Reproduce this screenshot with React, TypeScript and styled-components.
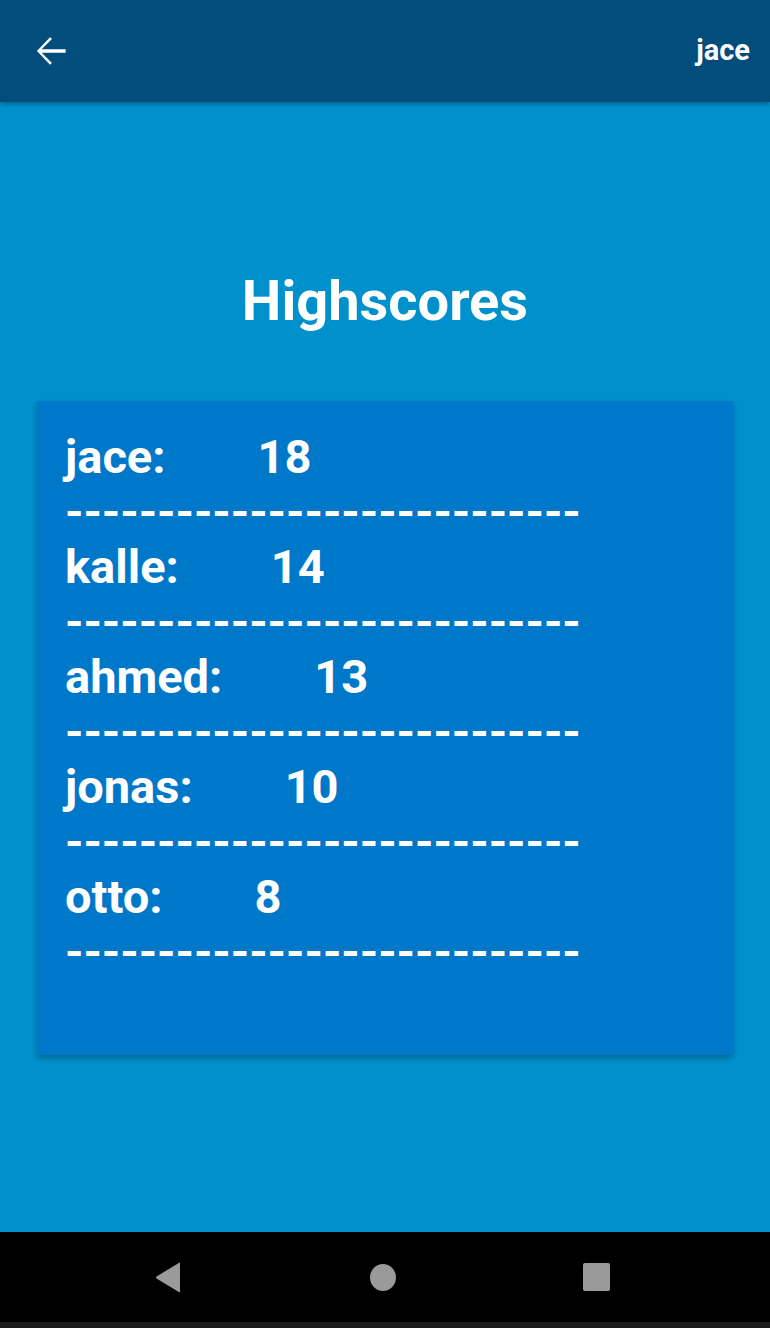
import React from "react";
import styled, { createGlobalStyle } from "styled-components";

const Global = createGlobalStyle`
  html, body { margin: 0; padding: 0; background: #0091cd; }
  body { font-family: Roboto, "Noto Sans", sans-serif; }
`;

const Screen = styled.div`
  width: 770px;
  height: 1328px;
  display: flex;
  flex-direction: column;
  background: #0091cd;
  overflow: hidden;
`;

const TopBar = styled.header`
  height: 102px;
  flex: none;
  background: #024d7b;
  display: flex;
  align-items: center;
  justify-content: space-between;
  padding: 0 20px 0 29px;
  box-shadow: 0 2px 5px rgba(0, 0, 0, 0.35);
  position: relative;
  z-index: 1;
`;

const UserName = styled.span`
  color: #fff;
  font-weight: 700;
  font-size: 29px;
  margin-top: -2px;
`;

const Main = styled.main`
  flex: 1;
  display: flex;
  flex-direction: column;
  align-items: center;
`;

const Title = styled.h1`
  margin: 164px 0 0;
  height: 70px;
  color: #fff;
  font-size: 56px;
  font-weight: 700;
  line-height: 70px;
`;

const Card = styled.section`
  margin-top: 65px;
  width: 696px;
  height: 654px;
  box-sizing: border-box;
  align-self: flex-start;
  margin-left: 37px;
  background: #0078c9;
  padding: 28px 0 0 28px;
  box-shadow: 0 3px 6px rgba(0, 0, 0, 0.3);
`;

const Entry = styled.div`
  display: flex;
  flex-direction: column;
`;

const Line = styled.div`
  display: flex;
  color: #fff;
  font-size: 47px;
  font-weight: 700;
  line-height: 55px;
  height: 55px;
  white-space: pre;
`;

const Name = styled.span`
  margin-right: 92px;
`;

const Dashes = styled(Line)`
  letter-spacing: -0.1px;
`;

const NavBar = styled.nav`
  height: 90px;
  flex: none;
  background: #000;
  display: flex;
  align-items: center;
  justify-content: space-between;
  padding: 0 160px 0 155px;
  border-bottom: 6px solid #1b1b1b;
`;

const HomeDot = styled.div`
  width: 26px;
  height: 27px;
  border-radius: 50%;
  background: #9a9a9a;
`;

const RecentSquare = styled.div`
  width: 27px;
  height: 28px;
  border-radius: 2px;
  background: #9a9a9a;
`;

const scores = [
  { name: "jace:", score: 18 },
  { name: "kalle:", score: 14 },
  { name: "ahmed:", score: 13 },
  { name: "jonas:", score: 10 },
  { name: "otto:", score: 8 },
];

export default function App() {
  return (
    <>
      <Global />
      <Screen>
        <TopBar>
          <svg width="44" height="44" viewBox="0 0 24 24" fill="#fff">
            <path d="M20 11.1H6.9l5.6-5.6-1-1L4.3 12l7.2 7.5 1-1-5.6-5.6H20z" />
          </svg>
          <UserName>jace</UserName>
        </TopBar>
        <Main>
          <Title>Highscores</Title>
          <Card>
            {scores.map((s) => (
              <Entry key={s.name}>
                <Line>
                  <Name>{s.name}</Name>
                  <span>{s.score}</span>
                </Line>
                <Dashes>{"----------------------------"}</Dashes>
              </Entry>
            ))}
          </Card>
        </Main>
        <NavBar>
          <svg width="27" height="31" viewBox="0 0 27 31">
            <path d="M25 1.5 L25 29.5 Q25 31 23.8 30 L1.5 16.5 Q0.5 15.5 1.5 14.5 L23.8 1 Q25 0 25 1.5z" fill="#9a9a9a" />
          </svg>
          <HomeDot />
          <RecentSquare />
        </NavBar>
      </Screen>
    </>
  );
}
